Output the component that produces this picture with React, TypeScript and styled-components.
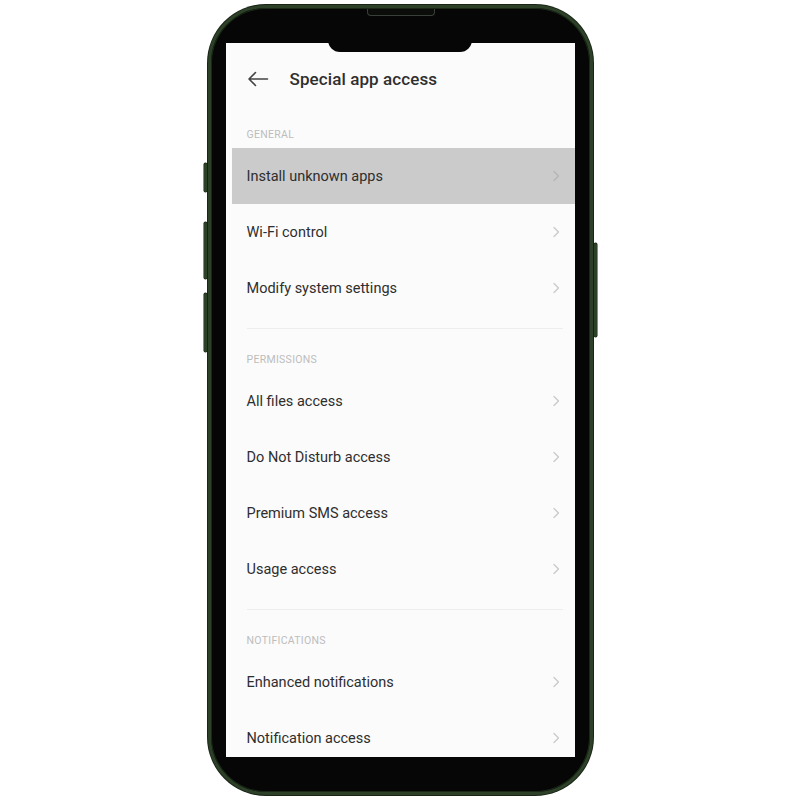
import styled, { createGlobalStyle } from 'styled-components';

const GlobalStyle = createGlobalStyle`
  html, body {
    margin: 0;
    padding: 0;
    background: #ffffff;
    font-family: Roboto, "Noto Sans", "Liberation Sans", sans-serif;
  }
`;

const Page = styled.div`
  width: 800px;
  height: 800px;
  display: flex;
  justify-content: center;
  padding-top: 5px;
  box-sizing: border-box;
`;

const Phone = styled.div`
  position: relative;
  width: 385px;
  height: 790px;
  box-sizing: border-box;
  padding: 35px 15px;
  background: #050605;
  border: 3px solid #2c4127;
  border-radius: 58px;
  box-shadow: 0 0 0 1px #1a2417, inset 0 0 0 1px #1b2818;
`;

const SideButton = styled.div<{ $side: 'left' | 'right'; $top: number; $height: number }>`
  position: absolute;
  ${(p) => (p.$side === 'left' ? 'left: -7px;' : 'right: -7px;')}
  top: ${(p) => p.$top}px;
  width: 3px;
  height: ${(p) => p.$height}px;
  background: #2c4127;
  border-radius: 2px;
  box-shadow: 0 0 0 0.5px #141c12;
`;

const Speaker = styled.div`
  position: absolute;
  top: 1px;
  left: 156px;
  width: 66px;
  height: 6px;
  background: #0b0d0b;
  border: 1px solid #3a3f39;
  border-top: none;
  border-radius: 0 0 4px 4px;
`;

const Screen = styled.div`
  position: relative;
  width: 100%;
  height: 100%;
  background: #fbfbfb;
  overflow: hidden;
`;

const Notch = styled.div`
  position: absolute;
  top: -12px;
  left: 102px;
  width: 144px;
  height: 21px;
  background: #050605;
  border-radius: 0 0 12px 12px;
  z-index: 2;
`;

const Camera = styled.div`
  position: absolute;
  top: -8px;
  left: 119px;
  width: 6px;
  height: 6px;
  border-radius: 50%;
  background: #4a5563;
  box-shadow: 0 0 0 2px #15181b;
  z-index: 3;
`;

const Header = styled.div`
  display: flex;
  align-items: center;
  height: 24px;
  margin-top: 24px;
  padding-left: 21px;
  gap: 21px;
`;

const BackButton = styled.div`
  display: flex;
  align-items: center;
  width: 22px;
  height: 24px;
`;

const Title = styled.div`
  font-size: 17px;
  font-weight: 500;
  color: #2f2f2f;
  letter-spacing: 0.1px;
`;

const List = styled.div`
  display: flex;
  flex-direction: column;
  margin-top: 29px;
`;

const Section = styled.div`
  display: flex;
  flex-direction: column;
`;

const SectionLabel = styled.div`
  height: 28px;
  line-height: 30px;
  padding-left: 21px;
  font-size: 10.5px;
  color: #bdbdbd;
  letter-spacing: 0.3px;
`;

const Row = styled.div<{ $active?: boolean }>`
  display: flex;
  align-items: center;
  justify-content: space-between;
  height: 56px;
  margin-left: 6px;
  padding: 0 15px;
  background: ${(p) => (p.$active ? '#cbcbcb' : 'transparent')};
`;

const RowText = styled.div`
  font-size: 14.5px;
  color: #2e2e2e;
`;

const Divider = styled.div`
  height: 1px;
  margin: 12px 12px 16px 21px;
  background: #ededed;
`;

const Chevron = ({ active }: { active?: boolean }) => (
  <svg width="8" height="12" viewBox="0 0 8 12">
    <path
      d="M2 1.5 L6.5 6 L2 10.5"
      fill="none"
      stroke={active ? '#b5b5b5' : '#c9c9c9'}
      strokeWidth="1.3"
      strokeLinecap="round"
      strokeLinejoin="round"
    />
  </svg>
);

const sections = [
  {
    label: 'GENERAL',
    items: ['Install unknown apps', 'Wi-Fi control', 'Modify system settings'],
  },
  {
    label: 'PERMISSIONS',
    items: ['All files access', 'Do Not Disturb access', 'Premium SMS access', 'Usage access'],
  },
  {
    label: 'NOTIFICATIONS',
    items: ['Enhanced notifications', 'Notification access'],
  },
];

export default function App() {
  return (
    <>
      <GlobalStyle />
      <Page>
        <Phone>
          <Speaker />
          <SideButton $side="left" $top={155} $height={29} />
          <SideButton $side="left" $top={214} $height={57} />
          <SideButton $side="left" $top={285} $height={59} />
          <SideButton $side="right" $top={235} $height={94} />
          <Screen>
            <Notch />
            <Camera />
            <Header>
              <BackButton>
                <svg width="22" height="16" viewBox="0 0 22 16">
                  <path
                    d="M20.5 8 H2 M8.5 1.5 L2 8 L8.5 14.5"
                    fill="none"
                    stroke="#444444"
                    strokeWidth="1.6"
                    strokeLinecap="round"
                    strokeLinejoin="round"
                  />
                </svg>
              </BackButton>
              <Title>Special app access</Title>
            </Header>
            <List>
              {sections.map((s, si) => (
                <Section key={s.label}>
                  {si > 0 && <Divider />}
                  <SectionLabel>{s.label}</SectionLabel>
                  {s.items.map((item, i) => {
                    const active = si === 0 && i === 0;
                    return (
                      <Row key={item} $active={active}>
                        <RowText>{item}</RowText>
                        <Chevron active={active} />
                      </Row>
                    );
                  })}
                </Section>
              ))}
            </List>
          </Screen>
        </Phone>
      </Page>
    </>
  );
}
